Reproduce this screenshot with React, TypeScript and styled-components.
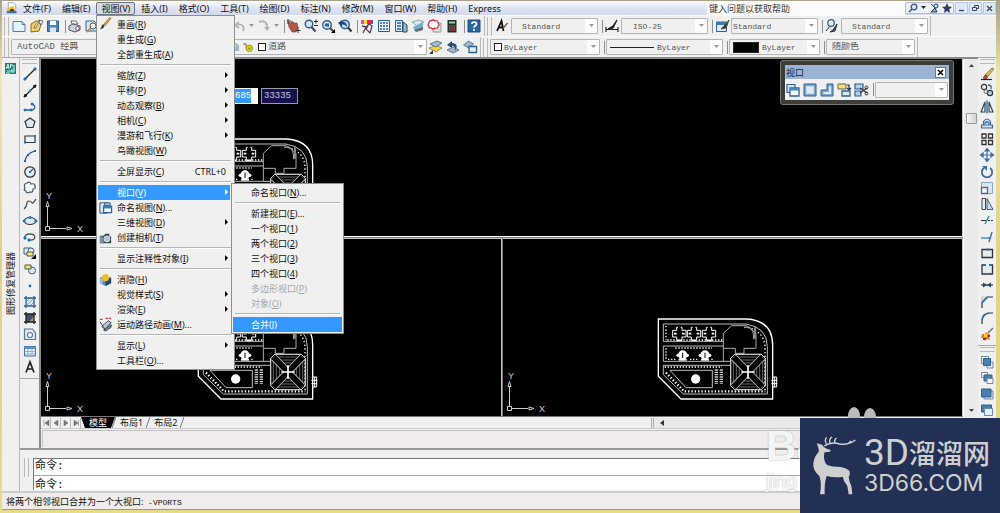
import React, { ReactNode } from "react";
import styled, { createGlobalStyle, css } from "styled-components";

const ui = `"Noto Sans", "Noto Sans CJK SC", sans-serif`;
const mono = `"Liberation Mono", "Noto Sans CJK SC", monospace`;
const face = "#f0f0f0";

const Global = createGlobalStyle`
  * { box-sizing: border-box; }
  body { margin: 0; background: #e6dc96; font-family: ${ui}; font-size: 9px; color: #111; }
  button, input, select { font: inherit; color: inherit; margin: 0; padding: 0; border: 0; background: none; border-radius: 0; }
  svg { display: block; flex: none; }
`;

/* ---------- icons, drawn on a 16 x 16 grid ---------- */

const B = "#2f6190";
const L = "#b9d3ea";
const K = "#333";

const icons: Record<string, ReactNode> = {
  app: (<><path d="M3 1h7l3 3v6H3z" fill="#fff" stroke="#8a97a8" /><path d="M1 9l8-4 5 8H3z" fill="#f0c02c" /><path d="M5 10l4-1 4 5H6z" fill="#23344c" /><path d="M1 12h13v3H1z" fill="#3f6fa6" /></>),
  new: (<><path d="M2 3.500h9l3 3v7H2z" fill="#e4f2fc" stroke="#4f7ea8" /><path d="M11 3.500v3h3" fill="none" stroke="#4f7ea8" /></>),
  open: (<><path d="M3 6l5-3 6 0-3 10-8 1z" fill="#f2d36b" stroke="#8a6c20" /><path d="M6 10c1-4 3-5 6-6l-1-2 4 1-2 4-1-2c-2 1-4 2-4 5z" fill="#fff" stroke="#444" strokeWidth=".7" /></>),
  save: (<><path d="M2.500 3h11v10.500h-11z" fill="#4b83b5" stroke="#2f5a86" /><path d="M5 3h6v4H5z" fill="#fff" /><path d="M5 9.500h6V14H5z" fill="#d7e6f3" /></>),
  print: (<><path d="M4 3h5l2 3H5z" fill="#fff" stroke="#667" /><path d="M2 8l4-2 7 2v4l-5 2-6-2z" fill="#ccd3e0" stroke="#556" /><circle cx="10.500" cy="10.500" r="1.800" fill="#fff" stroke="#556" /></>),
  preview: (<><path d="M2 3h8l3 3v7H2z" fill="#d6e8f6" stroke={B} /><circle cx="9" cy="8" r="3" fill="#fff" stroke="#456" /><path d="M7 10l-4 4" stroke="#c78e31" strokeWidth="2" /></>),
  undo: <path d="M12 13c2-4-1-8-6-6M8 4L4 7l4 3" fill="none" stroke="#b4b4b4" strokeWidth="1.800" />,
  redo: (<><path d="M3 4c6-2 8 1 8 5" fill="none" stroke="#b4b4b4" strokeWidth="2" /><path d="M8 9h6l-3 4z" fill="#b4b4b4" /></>),
  pan: (<><path d="M2 4l3 1 1-2 2 2 3 0 1 4-2 5H6L3 9z" fill="#b4574c" stroke="#7c302a" strokeWidth=".6" /><path d="M12 9v6M9.500 12.500h5M2 1v5M1 3h4" stroke="#333" /></>),
  zoom: (<><circle cx="6" cy="6" r="3.800" fill="#cfe3f4" stroke={B} strokeWidth="1.400" /><path d="M8.500 9l4 4.500" stroke="#445" strokeWidth="2" /><path d="M11 3.500h4M13 1.500v4M11 7.500h4" stroke={K} /></>),
  zoomwin: (<><circle cx="7" cy="7" r="4.300" fill="#cfe3f4" stroke={B} strokeWidth="1.400" /><path d="M5 5.500h4v3H5z" fill={B} /><path d="M10 10l3 3" stroke="#445" strokeWidth="2" /><path d="M15 11v4h-4z" fill="#000" /></>),
  zoomprev: (<><circle cx="8" cy="6.500" r="4.300" fill={L} stroke={B} strokeWidth="1.400" /><path d="M11 9.500l3.500 4" stroke="#334" strokeWidth="2" /><path d="M1 5l4-3v2c4 0 5 2 5 5-1-2-3-2.500-5-2.500V9z" fill="#23466e" /></>),
  props: (<><path d="M2 2h3v4H2z" fill="#ef3fd0" /><path d="M5 2h3v4H5z" fill="#f3e02c" /><path d="M8 2h4v4H8z" fill="#e24" /><path d="M12 2h2v4h-2z" fill="#36c" /><path d="M3 8l4 1 3-3 3 2-2 7M7 9l-3 6M9 8l-2 3 4 4" fill="none" stroke="#58424c" strokeWidth="1.300" /></>),
  dcenter: (<><path d="M2.500 2.500h11v11h-11z" fill="#e5eff8" stroke={B} /><path d="M4 5h2M7 5h2M10 5h2M4 8h2M7 8h2M10 8h2M4 11h2M7 11h2M10 11h2" stroke={B} strokeWidth="1.700" /></>),
  palettes: (<><path d="M2.500 2.500h7v11h-7z" fill="#dceaf6" stroke={B} /><path d="M4 5h4M4 8h4M4 11h4" stroke={B} strokeWidth="1.500" /><path d="M10 4l4 3v7h-4z" fill="#9dbad3" stroke="#345" /></>),
  sheets: (<><path d="M2 4l7-2 5 2-7 4z" fill="#dfe6ea" stroke="#8aa" /><path d="M3 9l10-5v6l-8 3z" fill="#7cadc8" /><path d="M4 12l9-3v3l-7 2z" fill="#5b6e77" /></>),
  markup: (<><path d="M6 5h8v9H6z" fill="#ddd" stroke="#999" /><path d="M2 5q0-3 2-2 2-2 4 0 3-1 3 2 2 2 0 3 0 3-3 2-2 2-4 0-3 0-2-2-2-1 0-3z" fill="#fff" stroke="#d22c39" strokeWidth="1.200" /></>),
  calc: (<><path d="M3.500 2h9v12.500h-9z" fill="#25302d" /><path d="M5 3.500h6v2H5z" fill="#92d69b" /><path d="M5 8h6M5 10h6M5 12h6" stroke="#d9615b" strokeWidth="1" strokeDasharray="1.500 .8" /></>),
  help: (<><path d="M2 2h12v12H2z" fill="#2b689e" stroke="#1d4a78" /><path d="M6 6q0-2 2.200-2T10.500 6q0 1-1.500 2-1 .6-1 1.700M8 11v1.700" stroke="#fff" strokeWidth="1.700" fill="none" /></>),
  textstyle: (<><path d="M3 13L7.500 3l2 10M4.500 9.500h5" fill="none" stroke="#111" strokeWidth="1.800" /><path d="M14 5l-4 5-2 1 4-5z" fill="#c78040" stroke="#444" strokeWidth=".6" /></>),
  dimstyle: <path d="M2 11.500h12M2 9v5M14 9v5M13 2l-4 6-5 3 5-1z" fill="#333" stroke="#222" strokeWidth="1.200" />,
  tablestyle: (<><path d="M2.500 4h10v9.500h-10z" fill="#d9eaf8" stroke={B} /><path d="M2.500 4h10v3h-10z" fill="#3c7ab5" /><path d="M15 2l-5 6-3 3 5-1z" fill="#333" stroke="#553" /></>),
  mleader: (<><circle cx="7" cy="5" r="3.300" fill="#e8f2fb" stroke={B} strokeWidth="1.300" /><path d="M6 8l-4 5M13 6L9 12l-3 2 5-1z" stroke="#333" fill="#555" /></>),
  layerstate: (<><path d="M1 9l7-3 6 3-6 4z" fill="#f1d145" stroke="#77722d" strokeWidth=".7" /><path d="M2 5l7-3 5 2-6 4z" fill="#9dbbd5" stroke="#456" strokeWidth=".7" /><path d="M1 15l4-4v4z" fill="#246" /></>),
  layerprev: (<><path d="M2 11l6-3 6 3-6 3z" fill="#9bb8d3" stroke="#456" strokeWidth=".7" /><path d="M2 6l5-4v2c5 0 6 4 3 8 1-4-1-5-3-5v2z" fill="#274d7b" /></>),
  layeriso: (<><path d="M1.500 6l5-4 5 3-5 4z" fill="#9cb9d6" stroke="#456" strokeWidth=".7" /><path d="M7 7.500h7.500v6H7z" fill="#e1effa" stroke={B} strokeWidth="1.300" /></>),
  lock: (<><path d="M2 5q1-3 3-1v4" fill="none" stroke="#9b951b" strokeWidth="1.500" /><circle cx="9" cy="9" r="4" fill="#e6df28" stroke="#867f15" /><path d="M9 7v4M7 9h4" stroke="#867f15" /></>),
  globe: (<><circle cx="7" cy="8" r="4.500" fill="#bfd6e2" stroke="#7893a0" /><path d="M8 5l5 8H7z" fill="#8fb2c8" /></>),
  line: (<><path d="M3 13L13 3" stroke="#222" strokeWidth="1.200" /><path d="M2 12h2v2H2zM12 2h2v2h-2z" fill="#1873c4" stroke="#1873c4" /></>),
  xline: (<><path d="M2 14L14 2" stroke="#222" strokeWidth="1.200" /><path d="M2 14l1-3 2 2zM14 2l-1 3-2-2z" fill="#222" stroke="#222" /><path d="M7 7h2v2H7z" fill="#1873c4" /></>),
  pline: (<><path d="M3 11h6c4 0 5-3 2-6" fill="none" stroke="#2a5c8d" strokeWidth="1.300" /><path d="M2 10h2v2H2zM8 10h2v2H8zM9 4h2v2H9z" fill="#1873c4" stroke="#1873c4" strokeWidth=".6" /></>),
  polygon: <path d="M8 3l5 3.500-2 6H5l-2-6z" fill="#dbe7f0" stroke="#333" strokeWidth="1.200" />,
  rect: (<><path d="M3 5h10v6.500H3z" fill="#e9f0f6" stroke="#333" strokeWidth="1.200" /><path d="M2 10.500h2v2H2zM12 4h2v2h-2z" fill="#1873c4" /></>),
  arc: (<><path d="M3 14C3 8 6 5 13 3" fill="none" stroke="#2a5c8d" strokeWidth="1.300" /><path d="M2 12h2v2H2zM5 6h2v2H5zM12 2h2v2h-2z" fill="#1873c4" /></>),
  circle: (<><circle cx="8" cy="8" r="5.200" fill="#e3edf6" stroke="#333" strokeWidth="1.300" /><path d="M8 8l3-3" stroke={B} strokeWidth="1.300" /><path d="M7 7h2v2H7z" fill="#1873c4" /></>),
  cloud: <path d="M5 3q3-2 4 1 4-1 4 2 1 3-2 3 0 4-3 3-4 2-4-1-3-1-1-3-2-4 2-5z" fill="#f4f8fb" stroke="#456" strokeWidth="1.200" />,
  spline: <path d="M2 13C7 9 3 5 7 5s2 6 7-2" fill="none" stroke="#444" strokeWidth="1.200" />,
  ellipse: (<><ellipse cx="8" cy="8" rx="5.500" ry="3.500" fill="#dbe9f5" stroke="#333" strokeWidth="1.200" /><path d="M1 7h2v2H1zM7 3.500h2v2H7zM13 7h2v2h-2z" fill="#1873c4" stroke="#1873c4" strokeWidth=".5" /></>),
  earc: (<><path d="M7 11C14 12 15 5 8 5 4 5 2 7 3 9" fill="none" stroke="#456" strokeWidth="1.300" /><path d="M2 8h2v2H2zM6 10h2v2H6z" fill="#1873c4" stroke="#1873c4" /></>),
  insert: (<><path d="M2 3h7v6H2z" fill="#dce9f4" stroke={B} /><circle cx="9" cy="6" r="3" fill="#eef5fa" stroke={B} /><path d="M5 7h6v4H5z" fill="#ecea6c" stroke="#555" /><path d="M14 9v5H9z" fill="#111" /></>),
  block: (<><circle cx="10" cy="9.500" r="3.500" fill="#d8e7f3" stroke={B} /><path d="M3 4h6v4H3z" fill="#ecea6c" stroke="#555" /></>),
  point: <circle cx="8" cy="8" r="1.400" fill="#1873c4" />,
  hatch: (<><path d="M4 4h8v8H4z" fill="#d4e4f1" /><path d="M4 8l4-4M4 12l8-8M8 12l4-4" stroke="#86a9c6" /><path d="M4 2v12M12 2v12M2 4h12M2 12h12" stroke={B} strokeWidth="1.300" /></>),
  gradient: (<><path d="M4 4h8v8H4z" fill="#41506a" /><path d="M7 12l5-6v6z" fill="#a5a16a" /><path d="M4 2v12M12 2v12M2 4h12M2 12h12" stroke="#222" strokeWidth="1.300" /></>),
  region: (<><path d="M2.500 3h8l3 4v6.500h-11z" fill="#dbe8f3" stroke="#577b9b" strokeWidth="1.200" /><circle cx="8" cy="9" r="2.500" fill="#fff" stroke="#577b9b" strokeWidth="1.200" /></>),
  table: (<><path d="M2.500 3.500h11v9.500h-11z" fill="#e5f0fa" stroke="#3b6d9e" /><path d="M2.500 3.500h11v2.500h-11z" fill="#5b93c6" /><path d="M2.500 8.500h11M2.500 11h11M6 6v7M10 6v7" stroke="#7ba4ca" strokeWidth=".8" /></>),
  mtext: <path d="M4 13.500L8 3l4 10.500M5.500 10h5" fill="none" stroke="#222" strokeWidth="1.700" />,
  erase: (<><path d="M13 2l2 1-6 7-3-1z" fill="#e8c23c" stroke="#555" strokeWidth=".7" /><path d="M6 9l3 2-2 2-3-1z" fill="#c8433a" stroke="#633" strokeWidth=".6" /><path d="M2 13.500h11" stroke="#222" strokeWidth="1.200" /></>),
  copy: (<><circle cx="5" cy="5" r="2.600" fill="#fff" stroke="#333" strokeWidth="1.200" /><circle cx="11" cy="11" r="2.600" fill={L} stroke="#333" strokeWidth="1.200" /><circle cx="7" cy="9.500" r="2" fill="none" stroke="#666" /><path d="M9 3q4 0 3 4" fill="none" stroke={B} strokeWidth="1.300" /></>),
  mirror: (<><path d="M6 3v10H2zM10 3v10h4z" fill="#eee" stroke="#444" strokeWidth="1.200" /><path d="M8 1.500v13" stroke="#2a86d6" strokeWidth="1.600" /></>),
  offset: <path d="M2.500 13h11v-3h-2V6.500q-3.500-5-7 0V10h-2zM6 10V8q2-2 4 0v2z" fill="#cfe1f1" stroke="#3d6d9b" strokeWidth="1.200" />,
  array: <path d="M3 3h4v4H3zM9.500 3h4v4h-4zM3 9.500h4v4H3zM9.500 9.500h4v4h-4z" fill="#f4f8fb" stroke="#333" strokeWidth="1.300" />,
  move: <path d="M8 2v12M2 8h12M6 4l2-2.500L10 4zM6 12l2 2.500 2-2.500zM4 6L1.500 8 4 10zM12 6l2.500 2-2.500 2z" fill="#3a70a4" stroke="#3a70a4" strokeWidth="1.200" />,
  rotate: (<><path d="M5 4a5.200 5.200 0 1 0 6 0" fill="none" stroke="#3d6d9b" strokeWidth="1.800" /><path d="M3 2h5v5z" fill="#3d6d9b" /></>),
  scale: (<><path d="M2.500 2.500h11v11h-11z" fill="#dbe8f3" stroke="#86a8c5" /><path d="M2.500 7.500h6v6h-6z" fill="#f7fafc" stroke="#466f95" strokeWidth="1.300" /></>),
  stretch: (<><path d="M3 2.500h3.500v11H3z" fill="#eee" stroke="#444" /><path d="M8 2.500l6 11H8z" fill="#c2daee" stroke="#43637f" /></>),
  trim: (<><path d="M2 8.500h5M9 8.500h2M12 8.500h2" stroke="#333" strokeWidth="1.200" /><path d="M6 12l4-8" stroke="#2a86d6" strokeWidth="1.400" /></>),
  extend: (<><path d="M2 9h6" stroke="#2a86d6" strokeWidth="1.300" /><path d="M8 9h3" stroke="#333" /><path d="M10 13l3-10" stroke="#2a70b0" strokeWidth="1.400" /></>),
  breakpt: (<><path d="M3 4.500h10.500v8H3z" fill="#e4ecf3" stroke="#333" strokeWidth="1.300" /><path d="M8 3.500h2v2H8z" fill="#1873c4" /></>),
  break: (<><path d="M6 4H3v9h10.500V4H11" fill="#e4ecf3" stroke="#333" strokeWidth="1.300" /><path d="M5 3h2v2H5zM10 3h2v2h-2z" fill="#1873c4" /></>),
  join: (<><path d="M2 8h12" stroke="#444" strokeWidth="1.300" /><path d="M4 5.500L8 8l-4 2.500zM12 5.500L8 8l4 2.500z" fill="#23466e" /></>),
  chamfer: (<><path d="M3 14V8l5-5h6" fill="none" stroke="#333" strokeWidth="1.200" /><path d="M3 9l6-6" stroke="#2a86d6" strokeWidth="1.500" /><path d="M3 6V3h3" fill="none" stroke="#bbb" /></>),
  fillet: (<><path d="M3 14V11Q3 3 11 3h3" fill="none" stroke="#333" strokeWidth="1.200" /><path d="M3 10q1-6 7-7" fill="none" stroke="#2a70b0" strokeWidth="1.700" /></>),
  explode: (<><path d="M14 2l-5 5" stroke="#777" strokeWidth="1.600" /><path d="M3 8l3 0 1-2 2 2 2 0-1 3 1 3-3-1-2 2-1-3-3 0z" fill="#e8782c" /><path d="M5 8h3v3H5z" fill="#f3d23a" /><path d="M4 12h3v2H4zM9 9h2v2H9z" fill="#a92a22" /></>),
  front: (<><path d="M2.500 2.500h7v7h-7zM8 8h6v6H8z" fill="#eef4f9" stroke="#6d8ba7" /><path d="M4.500 4.500h7v7h-7z" fill="#4a7eae" stroke={B} /></>),
  back: (<><path d="M2.500 2.500h6v5h-6z" fill="#eef4f9" stroke="#6d8ba7" /><path d="M5 5h8v6H5z" fill="#4a7eae" stroke={B} /><path d="M8 8.500h6v5H8z" fill="#eef4f9" stroke="#6d8ba7" /></>),
  above: (<><path d="M5 5h9v8H5z" fill="#e1eaf2" stroke="#6d8ba7" /><path d="M2.500 3h9.500v8H2.500z" fill="#4a7eae" stroke={B} /></>),
  under: (<><path d="M2.500 3h10v7h-10z" fill="#4a7eae" stroke={B} /><path d="M5.500 6.500h8v7h-8z" fill="#e1eff9" stroke="#6d8ba7" /></>),
  vpdialog: (<><path d="M2 2.500h8v8H2z" fill="#d5e5f2" stroke={B} strokeWidth="1.200" /><path d="M5 6h9v8H5z" fill="#f3f8fc" stroke={B} strokeWidth="1.300" /><path d="M5 6h9v2.500H5z" fill="#4b85b9" /></>),
  vpsingle: (<><path d="M2 2h12v12H2z" fill="#7ea7cb" stroke={B} /><path d="M4.500 4.500h7v7h-7z" fill="#dcebf7" stroke="#c5daec" /></>),
  vppoly: (<><path d="M8 2h6v12H2V8h6z" fill="#7ea7cb" stroke={B} /><path d="M11 4.500V11H4.500" fill="none" stroke="#dcebf7" strokeWidth="2" /></>),
  vpobject: (<><path d="M2 2h8v5H2z" fill="#efe66a" stroke="#666" /><path d="M6 9h8v5H6z" fill="#dbe9f5" stroke={B} strokeWidth="1.300" /><path d="M11 3h2v4M11 6l2 2 2-2" fill="none" stroke="#234" strokeWidth="1.200" /></>),
  vpclip: (<><path d="M2 2h8v5H2zM2 9h6v5H2z" fill="#b9cfe2" stroke={B} strokeWidth="1.200" /><path d="M7 6l7 5M7 11l7-5" stroke="#334" strokeWidth="1.200" /><circle cx="13.500" cy="5.500" r="1.500" fill="none" stroke="#334" /><circle cx="13.500" cy="11.500" r="1.500" fill="none" stroke="#334" /></>),
  brush: (<><path d="M14 1L8 9l-2-1 6-7z" fill="#e6a23c" stroke="#7a4a20" strokeWidth=".6" /><path d="M7 9q-1 4-5 4 2-2 2-4 1-2 3 0z" fill="#3d3a48" /></>),
  namedview: (<><path d="M2 3h8v11H2z" fill="#dbe8f3" stroke="#446" /><path d="M7 3h6v3H7z" fill="#9fbdd6" stroke={B} /><path d="M6 6.500h8.500v7H6z" fill="#eef5fb" stroke={B} strokeWidth="1.300" /><path d="M6 6.500h8.500V9H6z" fill="#3f7cb4" /></>),
  camera: (<><path d="M2 6h4l2-2h4v3h2v7H2z" fill="#39424e" /><circle cx="9.500" cy="9.500" r="3.200" fill="#a8c6de" stroke="#dde" /><path d="M2 6l4 2v6H2z" fill="#7b8fa3" /></>),
  hide: (<><path d="M2 6l6-2 6 2v6l-6 3-6-3z" fill="#5c8bb8" /><path d="M8 8v7l6-3V6z" fill="#27486d" /><circle cx="8" cy="6" r="3.800" fill="#eebc2f" /><path d="M2 6l3 2v5l-3-1z" fill="#9dc0de" /></>),
  motion: (<><path d="M2 2.500h3M8 1.500h3M12 1l2 1" stroke="#d33" strokeWidth="1.500" /><path d="M4 10l7-6 3 2-7 7z" fill="#b8cadd" stroke="#3a4a5c" /><path d="M2 5l6 9M6 14l8-6v3l-6 4z" fill="#76889c" stroke="#3a4a5c" /></>),
};

function Icon({ name, size = 16 }: { name: string; size?: number }) {
  return <svg width={size} height={size} viewBox="0 0 16 16" fill="none" aria-hidden="true">{icons[name]}</svg>;
}

/* ---------- window frame ---------- */

const Frame = styled.div`
  position: relative;
  display: flex;
  flex-direction: column;
  min-height: 100vh;
  min-width: 1000px;
  padding: 1px 4px 3px 2px;
  background: linear-gradient(#a9a18a, #d8cf9a 10%, #efe7b8 15%, #dfd28a 50%, #e6dc86);
  overflow: hidden;
`;

const MenuBar = styled.nav`
  display: flex;
  align-items: center;
  height: 14px;
  padding-left: 4px;
  background: linear-gradient(#fbfcff, #dfe4f4 50%, #d3daee);
`;

const MenuTitle = styled.button<{ $open?: boolean }>`
  height: 13px;
  padding: 0 4px;
  margin-right: 1px;
  line-height: 11px;
  white-space: nowrap;
  border: 1px solid transparent;
  border-radius: 2px;
  ${(p) => p.$open && css`border-color: #6e7480; background: #d6d9e2;`}
`;

const SearchBox = styled.input`
  width: 198px;
  height: 13px;
  margin-left: auto;
  padding-left: 2px;
  background: #fbfbfd;
  &::placeholder { color: #333; opacity: 1; }
`;

const SearchTools = styled.div`
  display: flex;
  align-items: center;
  height: 12px;
  width: 49px;
  border: 1px solid #b9bdd0;
  border-radius: 2px;
  background: #eef0f8;
`;

const SmallButton = styled.button<{ $w?: number }>`
  display: grid;
  place-items: center;
  width: ${(p) => p.$w ?? 13}px;
  height: 11px;
`;

const WindowButton = styled.button`
  display: grid;
  place-items: center;
  width: 13px;
  height: 12px;
  margin-left: 1px;
  border: 1px solid #b4cbe2;
  background: #dbeaf8;
`;

/* ---------- toolbars ---------- */

const ToolRow = styled.div`
  display: flex;
  height: 21px;
  background: ${face};
  border-top: 1px solid #fafafa;
`;

const ToolGroup = styled.div`
  display: flex;
  align-items: center;
  gap: 1px;
  padding: 0 2px;
  border-right: 1px solid #b8b8b8;
`;

const Grip = styled.span<{ $flat?: boolean }>`
  flex: none;
  width: 5px;
  height: 19px;
  margin-right: 1px;
  border: solid #b9b9b9;
  border-width: 0 1px;
  ${(p) => p.$flat && css`width: 15px; height: 5px; margin: 0 0 2px; border-width: 1px 0;`}
`;

const ToolButton = styled.button`
  flex: none;
  display: grid;
  place-items: center;
  width: 16px;
  height: 16px;
`;

const Divider = styled.span`
  flex: none;
  width: 4px;
  height: 13px;
  border-right: 1px solid #8c8c8c;
`;

const Spacer = styled.span<{ $w: number }>`
  flex: none;
  width: ${(p) => p.$w}px;
`;

const ComboBox = styled.label<{ $w: number }>`
  flex: none;
  display: flex;
  align-items: center;
  width: ${(p) => p.$w}px;
  height: 16px;
  border: 1px solid #b4b4b4;
  border-radius: 1px;
  background: ${face};
`;

const ComboSelect = styled.select<{ $pad: number; $cjk?: boolean }>`
  flex: 1;
  min-width: 0;
  height: 14px;
  padding-left: ${(p) => p.$pad}px;
  appearance: none;
  font-family: ${mono};
  font-size: ${(p) => (p.$cjk ? 9 : 8)}px;
  color: #555;
`;

const ComboArrow = styled.span`
  display: grid;
  place-items: center;
  width: 12px;
  height: 14px;
  background: #fcfcfc;
`;

const Swatch = styled.span<{ $fill?: string; $w?: number }>`
  flex: none;
  width: ${(p) => p.$w ?? 8}px;
  height: ${(p) => (p.$w ? 11 : 8)}px;
  margin-left: 3px;
  border: 1px solid #222;
  background: ${(p) => p.$fill ?? "#fff"};
`;

const LineSample = styled.span`
  width: 44px;
  height: 1px;
  margin-left: 3px;
  background: #222;
`;

const ArrowDown = ({ color = "#999" }: { color?: string }) => (
  <svg width="7" height="4" viewBox="0 0 7 4"><path d="M1 0h5L3.500 3z" fill={color} /></svg>
);

function Combo({ w, pad = 2, label, value, lead, cjk }: { w: number; pad?: number; label: string; value: string; lead?: ReactNode; cjk?: boolean }) {
  return (
    <ComboBox $w={w}>
      {lead}
      <ComboSelect $pad={pad} $cjk={cjk} aria-label={label}>
        <option>{value}</option>
      </ComboSelect>
      <ComboArrow><ArrowDown /></ComboArrow>
    </ComboBox>
  );
}

const Tools = ({ names }: { names: string[] }) => (
  <>{names.map((n) => <ToolButton key={n} aria-label={n}><Icon name={n} /></ToolButton>)}</>
);

/* ---------- main area ---------- */

const Body = styled.div`
  flex: 1;
  display: flex;
  background: ${face};
`;

const Palette = styled.aside`
  display: flex;
  flex-direction: column;
  align-items: center;
  width: 18px;
  padding-top: 5px;
  border-top: 1px solid #aaa;
  border-right: 1px solid #b9b9b9;
`;

const PaletteTitle = styled.span`
  margin-top: 178px;
  writing-mode: vertical-rl;
  text-orientation: sideways;
  transform: rotate(180deg);
  font-size: 9px;
  line-height: 13px;
`;

const Work = styled.div`
  flex: 1;
  min-width: 0;
  display: flex;
  flex-direction: column;
`;

const Desk = styled.div`
  flex: 1;
  display: flex;
  border-bottom: 2px solid #999;
`;

const SideBar = styled.div<{ $w: number }>`
  display: flex;
  flex-direction: column;
  width: ${(p) => p.$w}px;
  border-top: 1px solid #aaa;
`;

const SideGroup = styled.div<{ $h: number }>`
  display: flex;
  flex-direction: column;
  align-items: center;
  justify-content: space-between;
  height: ${(p) => p.$h}px;
  padding: 1px 0 3px;
  border-bottom: 1px solid #aaa;
`;

const Sheet = styled.main`
  flex: 1;
  min-width: 0;
  display: flex;
  flex-direction: column;
  border-left: 2px solid #8a8a8a;
  border-top: 2px solid #8a8a8a;
`;

const SheetTop = styled.div`
  flex: 1;
  display: flex;
`;

const Viewports = styled.div`
  flex: 1;
  display: grid;
  grid-template-columns: 1fr 1fr;
  grid-template-rows: 1fr 1fr;
  gap: 1px;
  background: #777;
  border-bottom: 1px solid #777;
`;

const Viewport = styled.section<{ $wide?: boolean }>`
  position: relative;
  min-width: 0;
  overflow: hidden;
  background: #000;
  border: solid #c4c4c4;
  border-width: ${(p) => (p.$wide ? "0 1px 1px 0" : "1px 1px 0 0")};
  ${(p) => p.$wide && css`grid-column: 1 / -1; border-bottom-color: #fff;`}
`;

const Placed = styled.div<{ $x: number; $b: number }>`
  position: absolute;
  left: ${(p) => p.$x}px;
  bottom: ${(p) => p.$b}px;
`;

const CoordPair = styled.div`
  position: absolute;
  left: 193px;
  top: 29px;
  display: flex;
  gap: 3px;
`;

const Coord = styled.input<{ $dark?: boolean }>`
  height: 16px;
  font-family: ${mono};
  font-size: 9px;
  ${(p) => p.$dark
    ? css`width: 37px; padding-left: 2px; color: #c8c8dc; background: #15104f; border: 1px solid #9a9aa8;`
    : css`width: 24px; color: #fff; border: solid #fff; border-width: 1px 7px 1px 1px; background: #3399ff;`}
`;

const VScroll = styled.div`
  display: flex;
  flex-direction: column;
  align-items: center;
  width: 15px;
  padding: 4px 2px;
  background: #eaeaea;
  border-left: 1px solid #fff;
`;

const Thumb = styled.div`
  width: 11px;
  height: 11px;
  margin-top: 46px;
  margin-bottom: auto;
  border: 1px solid #999;
  border-radius: 1px;
  background: linear-gradient(90deg, #f6f6f6, #d4d4d4);
`;

const TabRow = styled.div`
  display: flex;
  align-items: center;
  height: 12px;
  border-bottom: 1px solid #ccc;
`;

const NavButton = styled.button`
  display: grid;
  place-items: center;
  width: 10px;
  height: 10px;
  border-right: 1px solid #bbb;
`;

const Tab = styled.button<{ $active?: boolean }>`
  height: 11px;
  padding: 0 3px 0 4px;
  line-height: 11px;
  ${(p) => p.$active && css`
    padding: 0 8px;
    margin-right: -3px;
    color: #fff;
    background: #000;
    clip-path: polygon(0 0, 100% 0, calc(100% - 4px) 100%, 4px 100%);
  `}
`;

const HScroll = styled.div`
  display: flex;
  align-items: center;
  width: 327px;
  height: 10px;
  margin-left: auto;
  padding-left: 6px;
  border-left: 3px double #aaa;
  background: #e9e9e9;
`;

const Band = styled.div`
  height: 17px;
  margin: 1px 0 1px 1px;
  border: solid #c2c2c2;
  border-width: 1px 0 0 1px;
  background: #f0ecec;
`;

const Command = styled.div`
  display: flex;
  gap: 2px;
  height: 41px;
  padding: 8px 0 1px 4px;
`;

const CommandLines = styled.div`
  flex: 1;
  display: flex;
  flex-direction: column;
  margin-left: 1px;
  background: #fff;
  border: solid #777;
  border-width: 1px 0 0 1px;
  font-size: 11px;
  font-family: ${mono};
`;

const History = styled.div`
  height: 17px;
  padding-left: 1px;
  line-height: 14px;
  border-bottom: 1px solid #aaa;
`;

const Prompt = styled.input`
  height: 14px;
  padding-left: 1px;
`;

const StatusBar = styled.footer`
  height: 19px;
  padding-left: 4px;
  line-height: 18px;
  white-space: pre;
  background: #f0ecec;
  border-top: 2px solid #ccc;
  border-bottom: 1px solid #999;
`;

const StatusCode = styled.span`
  font-family: ${mono};
  font-size: 8px;
`;

/* ---------- menus ---------- */

const Menu = styled.ul<{ $x: number; $y: number; $w: number }>`
  position: absolute;
  left: ${(p) => p.$x}px;
  top: ${(p) => p.$y}px;
  width: ${(p) => p.$w}px;
  margin: 0;
  padding: 1px;
  list-style: none;
  background: ${face};
  border: 1px solid #8e8e8e;
`;

const MenuItem = styled.button<{ $active?: boolean; $off?: boolean; $sub?: boolean }>`
  display: grid;
  grid-template-columns: ${(p) => (p.$sub ? "18px" : "19px")} 1fr auto;
  align-items: center;
  width: ${(p) => (p.$active && !p.$sub ? "calc(100% - 3px)" : "100%")};
  height: 15px;
  padding-right: ${(p) => (p.$active && !p.$sub ? 1 : 4)}px;
  line-height: 15px;
  text-align: left;
  white-space: nowrap;
  ${(p) => p.$active && css`background: #3399ff; color: #fff;`}
  ${(p) => p.$off && css`color: #a8a8a8;`}
`;

const Shortcut = styled.span`
  padding-right: 3px;
`;

const MenuLine = styled.li`
  height: 6px;
  padding: 2px 2px 0;
  &::before { content: ""; display: block; border-top: 1px solid #b5b5b5; border-bottom: 1px solid #fff; }
`;

type Item = { t: string; k: string; dots?: boolean; icon?: string; more?: boolean; short?: string; active?: boolean; off?: boolean };

const viewMenu: (Item | null)[] = [
  { t: "重画", k: "R", icon: "brush" }, { t: "重生成", k: "G" }, { t: "全部重生成", k: "A" }, null,
  { t: "缩放", k: "Z", more: true }, { t: "平移", k: "P", more: true }, { t: "动态观察", k: "B", more: true },
  { t: "相机", k: "C", more: true }, { t: "漫游和飞行", k: "K", more: true }, { t: "鸟瞰视图", k: "W" }, null,
  { t: "全屏显示", k: "C", short: "CTRL+0" }, null,
  { t: "视口", k: "V", more: true, active: true }, { t: "命名视图", k: "N", dots: true, icon: "namedview" },
  { t: "三维视图", k: "D", more: true }, { t: "创建相机", k: "T", icon: "camera" }, null,
  { t: "显示注释性对象", k: "I", more: true }, null,
  { t: "消隐", k: "H", icon: "hide" }, { t: "视觉样式", k: "S", more: true }, { t: "渲染", k: "E", more: true },
  { t: "运动路径动画", k: "M", dots: true, icon: "motion" }, null,
  { t: "显示", k: "L", more: true }, { t: "工具栏", k: "O", dots: true },
];

const portMenu: (Item | null)[] = [
  { t: "命名视口", k: "N", dots: true }, null,
  { t: "新建视口", k: "E", dots: true }, { t: "一个视口", k: "1" }, { t: "两个视口", k: "2" }, { t: "三个视口", k: "3" },
  { t: "四个视口", k: "4" }, { t: "多边形视口", k: "P", off: true }, { t: "对象", k: "O", off: true }, null,
  { t: "合并", k: "J", active: true },
];

const MenuList = ({ items, sub }: { items: (Item | null)[]; sub?: boolean }) => (
  <>
    {items.map((it, i) =>
      it ? (
        <li key={i}>
          <MenuItem $active={it.active} $off={it.off} $sub={sub} disabled={it.off}>
            <span>{it.icon && <Icon name={it.icon} size={15} />}</span>
            <span>{it.t}(<u>{it.k}</u>){it.dots && "..."}</span>
            {it.more ? <svg width="5" height="7" viewBox="0 0 5 7"><path d="M1 0l3 3-3 3z" fill={it.active ? "#fff" : "#000"} /></svg> : <Shortcut>{it.short}</Shortcut>}
          </MenuItem>
        </li>
      ) : <MenuLine key={i} />,
    )}
  </>
);

/* ---------- floating viewport toolbar ---------- */

const Floating = styled.div`
  position: absolute;
  right: 46px;
  top: 60px;
  width: 174px;
  padding: 4px;
  border: 1px solid #77776f;
  border-radius: 3px;
  background: #3d3d3a;
`;

const FloatTitle = styled.div`
  display: flex;
  align-items: center;
  justify-content: space-between;
  height: 14px;
  padding: 0 3px 0 1px;
  background: #9bb4d3;
  color: #223;
`;

const CloseButton = styled.button`
  display: grid;
  place-items: center;
  width: 11px;
  height: 11px;
  background: #fafafa;
  border: 1px solid #777;
`;

const FloatTools = styled.div`
  display: flex;
  align-items: center;
  gap: 1px;
  height: 21px;
  background: ${face};
`;

/* ---------- brand overlay ---------- */

const Brand = styled.div`
  position: absolute;
  right: 0;
  bottom: 0;
  width: 234px;
  height: 107px;
`;

const Mark = styled.div<{ $y: number; $size: number; $bold?: boolean }>`
  position: absolute;
  left: 0;
  top: ${(p) => p.$y}px;
  font-family: "Liberation Sans", sans-serif;
  font-size: ${(p) => p.$size}px;
  line-height: ${(p) => p.$size}px;
  font-weight: ${(p) => (p.$bold ? 700 : 400)};
  color: rgba(255, 255, 255, 0.9);
  text-shadow: 0 0 2px #aaa;
`;

const Paws = styled.svg`
  position: absolute;
  left: 74px;
  top: 0;
`;

const LogoPanel = styled.div`
  position: absolute;
  right: 0;
  bottom: 0;
  display: flex;
  align-items: center;
  width: 200px;
  height: 95px;
  padding-left: 12px;
  gap: 7px;
  background: #223055;
  color: #cfcfcf;
`;

const LogoText = styled.div`
  display: flex;
  flex-direction: column;
  gap: 1px;
  white-space: nowrap;
`;

const LogoTop = styled.div`
  display: flex;
  align-items: center;
  height: 34px;
  font: 400 37px/34px Roboto, sans-serif;
`;

const LogoCjk = styled.span`
  font: 500 27px/30px "Noto Sans CJK SC", sans-serif;
`;

const LogoDomain = styled.div`
  font: 400 23px/24px Inter, sans-serif;
`;

/* ---------- drawing content ---------- */

const Plan = () => (
  <svg width="180" height="120" viewBox="0 0 540 360" fill="none" stroke="#fff" strokeWidth="3">
    <path d="M55 57H320Q398 62 398 135V297H123L55 229z" strokeWidth="4" />
    <path d="M70 72H318Q382 82 382 140V282H130L70 224V196H270M70 72V124H250M70 138H250M70 138V184H270" stroke="#bbb" />
    <path d="M78 78V120" strokeDasharray="4 6" strokeWidth="4" />
    <path d="M82 120H108M130 120H152M176 120H198M216 120H248" strokeDasharray="4 5" strokeWidth="5" />
    <path d="M78 145V178M84 178H106M150 178H172M214 178H222M106 144H216" strokeDasharray="4 5" strokeWidth="4" />
    <path d="M74 201H246" strokeDasharray="4 5" strokeWidth="5" />
    <path d="M78 218L132 274H376" strokeDasharray="4 6" strokeWidth="7" />
    <path d="M375 270V140Q372 92 316 80" strokeDasharray="4 7" strokeWidth="4" />
    {[118, 162, 207].map((x) => (
      <g key={x}>
        <path d={`M${x - 8} 82v9h-12v20h12v10M${x + 8} 82v9h12v20h-12v10M${x - 8} 82h4M${x + 4} 82h4`} />
        <path d={`M${x - 8} 121h16M${x - 16} 101h8M${x + 8} 101h8`} strokeWidth="5" />
      </g>
    ))}
    {[128, 195].map((x) => (
      <g key={x} fill="#fff" stroke="none">
        <circle cx={x} cy="165" r="14" />
        <circle cx={x - 14} cy="166" r="5" /><circle cx={x + 14} cy="166" r="5" />
        <path d={`M${x - 12} 176h24v6h-24z`} />
        <path d={`M${x} 158v16`} stroke="#000" strokeWidth="3" />
      </g>
    ))}
    <path d="M250 184V100L275 77H320L348 100V145H312V160H286V145H252M312 82H330Q341 90 341 118" stroke="#aaa" />
    <path d="M345 116V82" stroke="#888" strokeWidth="6" />
    <path d="M90 211H217V263H138z" stroke="#bbb" />
    <circle cx="167" cy="237" r="14" fill="#fff" stroke="none" />
    <path d="M229 208V252M244 208V252" strokeDasharray="4 3" strokeWidth="10" stroke="#ccc" />
    <path d="M284 163H364L376 175V257L364 269H284L272 257V175z" stroke="#ccc" />
    <path d="M280 171H368V261H280zM289 180H359V252H289zM298 189H350V243H298zM307 198H341V234H307z" stroke="#999" strokeWidth="2" />
    <path d="M281 172L367 260M367 172L281 260" stroke="#bbb" strokeWidth="22" />
    <path d="M281 172L367 260M367 172L281 260" stroke="#000" strokeWidth="17" />
    <path d="M284 163H364L376 175V257L364 269H284L272 257V175z" stroke="#ccc" />
    <path d="M324 196V236M304 216H344" strokeWidth="5" />
    <path d="M398 231h12v30h-12M394 241h18M394 251h18M404 231v30" />
  </svg>
);

const AxisLabel = styled.text`
  font: 9px "Liberation Sans", sans-serif;
  fill: #ccc;
`;

const Axes = () => (
  <svg width="42" height="44" viewBox="0 0 42 44" fill="none" stroke="#ccc">
    <path d="M1.500 34.500h4v4h-4zM3.500 34.500V14M5.500 36.500H22M3.500 9.500l-1.500 5h3zM28 36.500l-5-1.500v3z" />
    <g stroke="none"><AxisLabel x="2" y="7">Y</AxisLabel><AxisLabel x="33" y="40">X</AxisLabel></g>
  </svg>
);

const Deer = () => (
  <svg width="45" height="60" viewBox="0 0 135 180" fill="#cfcfcf">
    <path d="M14 22L30 26Q34 34 44 38L56 42 54 47 38 49Q32 66 42 84 52 92 74 92 98 92 112 104 116 112 110 124 112 138 118 150L121 175H110L106 150Q94 136 92 122 70 126 44 120 37 138 38 175H24Q30 142 22 120 2 104 4 82 6 62 20 48 22 40 14 22z" />
    <path d="M36 30Q60 16 82 24 110 28 130 12M44 26Q36 12 44 4M54 22Q50 10 60 2M68 20Q66 10 74 6M98 24Q112 24 116 14" fill="none" stroke="#cfcfcf" strokeWidth="4" />
  </svg>
);

const titles = ["文件(F)", "编辑(E)", "视图(V)", "插入(I)", "格式(O)", "工具(T)", "绘图(D)", "标注(N)", "修改(M)", "窗口(W)", "帮助(H)", "Express"];
const drawTools = ["line", "xline", "pline", "polygon", "rect", "arc", "circle", "cloud", "spline", "ellipse", "earc", "insert", "block", "point", "hatch", "gradient", "region", "table", "mtext"];
const modifyTools = ["erase", "copy", "mirror", "offset", "array", "move", "rotate", "scale", "stretch", "trim", "extend", "breakpt", "break", "join", "chamfer", "fillet", "explode"];

export default function App() {
  return (
    <Frame>
      <Global />
      <MenuBar>
        <Icon name="app" size={12} />
        {titles.map((t, i) => <MenuTitle key={t} $open={i === 2}>{t}</MenuTitle>)}
        <SearchBox aria-label="帮助" placeholder="键入问题以获取帮助" />
        <SearchTools>
          <SmallButton aria-label="搜索"><svg width="10" height="10" viewBox="0 0 10 10"><circle cx="6" cy="4" r="2.800" fill="#d9e6f5" stroke="#345a8c" strokeWidth="1.300" /><path d="M4 6L1 9" stroke="#345a8c" strokeWidth="1.600" /></svg></SmallButton>
          <SmallButton $w={8} aria-label="选项"><ArrowDown color="#222" /></SmallButton>
          <SmallButton aria-label="通讯中心"><svg width="10" height="10" viewBox="0 0 10 10"><path d="M2 1l4 4M6 5l2 4H2l4-4z" fill="#9ab" stroke="#246" /><circle cx="7" cy="3" r="2" fill="#cde" stroke="#246" /></svg></SmallButton>
          <SmallButton aria-label="收藏夹"><svg width="10" height="10" viewBox="0 0 10 10"><path d="M5 0l1.500 3.500L10 4 7.300 6.300 8 10 5 8 2 10l.7-3.700L0 4l3.500-.5z" fill="#2c3f63" /></svg></SmallButton>
        </SearchTools>
        <WindowButton aria-label="最小化"><svg width="7" height="7"><path d="M1 5.500h5" stroke="#445" strokeWidth="1.400" /></svg></WindowButton>
        <WindowButton aria-label="还原"><svg width="7" height="7" fill="none" stroke="#445"><path d="M2.500 2V.5h4v3H5M.5 2.500h4v3h-4z" /></svg></WindowButton>
        <WindowButton aria-label="关闭"><svg width="7" height="7"><path d="M1 1l5 5M6 1L1 6" stroke="#445" strokeWidth="1.300" /></svg></WindowButton>
      </MenuBar>

      <ToolRow>
        <ToolGroup>
          <Grip />
          <Tools names={["new", "open", "save"]} /><Divider />
          <Tools names={["print", "preview"]} /><Spacer $w={129} />
          <Tools names={["undo"]} /><ArrowDown /><Tools names={["redo"]} /><ArrowDown /><Divider />
          <Tools names={["pan", "zoom", "zoomwin", "zoomprev"]} /><Divider />
          <Tools names={["props", "dcenter", "palettes", "sheets", "markup", "calc"]} /><Divider />
          <Tools names={["help"]} />
        </ToolGroup>
        <ToolGroup>
          <Grip />
          <Tools names={["textstyle"]} /><Combo w={87} pad={10} label="文字样式" value="Standard" /><Divider />
          <Tools names={["dimstyle"]} /><Combo w={87} pad={11} label="标注样式" value="ISO-25" /><Divider />
          <Tools names={["tablestyle"]} /><Combo w={87} pad={1} label="表格样式" value="Standard" /><Divider />
          <Tools names={["mleader"]} /><Combo w={87} pad={10} label="多重引线样式" value="Standard" />
        </ToolGroup>
      </ToolRow>

      <ToolRow>
        <ToolGroup>
          <Grip />
          <Combo w={130} pad={5} label="工作空间" value="AutoCAD 经典" cjk />
          <Spacer $w={78} />
          <Combo w={206} pad={2} label="图层" value="道路" cjk lead={<><Spacer $w={8} /><Icon name="globe" size={12} /><Icon name="lock" size={13} /><Swatch /></>} />
          <Tools names={["layerstate", "layerprev", "layeriso"]} />
        </ToolGroup>
        <ToolGroup>
          <Grip />
          <Combo w={110} label="颜色" value="ByLayer" lead={<Swatch />} /><Divider />
          <Combo w={117} pad={3} label="线型" value="ByLayer" lead={<LineSample />} /><Divider />
          <Combo w={91} pad={3} label="线宽" value="ByLayer" lead={<Swatch $w={26} $fill="#000" />} /><Divider />
          <Combo w={89} pad={5} label="打印样式" value="随颜色" cjk />
        </ToolGroup>
      </ToolRow>

      <Body>
        <Palette>
          <svg width="11" height="11" viewBox="0 0 11 11"><path d="M0 0h11v11H0z" fill="#16807a" /><path d="M1 6l2-5 1 5M1.500 4.500h2M5.500 1v4M7 1v2h3M2 8h3M6 7h3v2H6zM1 10h4M9 4v3" stroke="#d6f1ee" fill="none" /></svg>
          <PaletteTitle>图形修复管理器</PaletteTitle>
        </Palette>
        <Work>
          <Desk>
            <SideBar $w={19}>
              <SideGroup $h={321}><Grip $flat /><Tools names={drawTools} /></SideGroup>
            </SideBar>
            <Sheet>
              <SheetTop>
                <Viewports>
                  <Viewport $wide>
                    <Placed $x={139} $b={-4}><Plan /></Placed>
                    <Placed $x={3} $b={0}><Axes /></Placed>
                    <CoordPair>
                      <Coord aria-label="X" readOnly value="685" />
                      <Coord aria-label="Y" readOnly value="33335" $dark />
                    </CoordPair>
                  </Viewport>
                  <Viewport>
                    <Placed $x={139} $b={-4}><Plan /></Placed>
                    <Placed $x={3} $b={0}><Axes /></Placed>
                  </Viewport>
                  <Viewport>
                    <Placed $x={137} $b={-4}><Plan /></Placed>
                    <Placed $x={3} $b={0}><Axes /></Placed>
                  </Viewport>
                </Viewports>
                <VScroll>
                  <svg width="7" height="4"><path d="M1 4h5L3.500 1z" fill="#444" /></svg>
                  <Thumb />
                  <ArrowDown color="#444" />
                </VScroll>
              </SheetTop>
              <TabRow>
                {["M2 1v6M7 1L3 4l4 3z", "M6 1L2 4l4 3z", "M2 1l4 3-4 3z", "M6.500 1v6M2 1l4 3-4 3z"].map((d) => (
                  <NavButton key={d} aria-label="翻页"><svg width="8" height="8"><path d={d} fill="#777" stroke="#777" strokeWidth=".6" /></svg></NavButton>
                ))}
                <Tab $active>模型</Tab>
                <svg width="4" height="11"><path d="M4 0L0 11" stroke="#777" /></svg>
                <Tab>布局1</Tab>
                <svg width="4" height="11"><path d="M4 0L0 11" stroke="#777" /></svg>
                <Tab>布局2</Tab>
                <svg width="4" height="11"><path d="M4 0L0 11" stroke="#777" /></svg>
                <HScroll><svg width="4" height="6"><path d="M4 0L0 3l4 3z" fill="#333" /></svg></HScroll>
              </TabRow>
              <Band />
            </Sheet>
            <SideBar $w={18}>
              <SideGroup $h={288}><Grip $flat /><Tools names={modifyTools} /></SideGroup>
              <SideGroup $h={76}><Grip $flat /><Tools names={["front", "back", "above", "under"]} /></SideGroup>
            </SideBar>
          </Desk>
          <Command>
            <Grip />
            <CommandLines>
              <History>命令:</History>
              <Prompt aria-label="命令行" defaultValue="命令:" />
            </CommandLines>
          </Command>
        </Work>
      </Body>
      <StatusBar>将两个相邻视口合并为一个大视口:  <StatusCode>-VPORTS</StatusCode></StatusBar>

      <Floating>
        <FloatTitle>视口<CloseButton aria-label="关闭"><svg width="7" height="7"><path d="M1 1l5 5M6 1L1 6" stroke="#000" strokeWidth="1.500" /></svg></CloseButton></FloatTitle>
        <FloatTools>
          <Tools names={["vpdialog", "vpsingle", "vppoly", "vpobject", "vpclip"]} /><Divider />
          <Combo w={73} label="视口比例" value="" />
        </FloatTools>
      </Floating>

      <Menu $x={96} $y={15} $w={139}><MenuList items={viewMenu} /></Menu>
      <Menu $x={231} $y={183} $w={113}><MenuList items={portMenu} sub /></Menu>

      <Brand>
        <Mark $y={19} $size={42} $bold>Bai</Mark>
        <Mark $y={65} $size={20}>jing</Mark>
        <Paws width="60" height="30" viewBox="0 0 60 30"><ellipse cx="14" cy="10" rx="6" ry="9" fill="#bbb" /><ellipse cx="30" cy="11" rx="6" ry="9" fill="#bbb" /></Paws>
        <LogoPanel>
          <Deer />
          <LogoText>
            <LogoTop>3D<LogoCjk>溜溜网</LogoCjk></LogoTop>
            <LogoDomain>3D66.COM</LogoDomain>
          </LogoText>
        </LogoPanel>
      </Brand>
    </Frame>
  );
}
